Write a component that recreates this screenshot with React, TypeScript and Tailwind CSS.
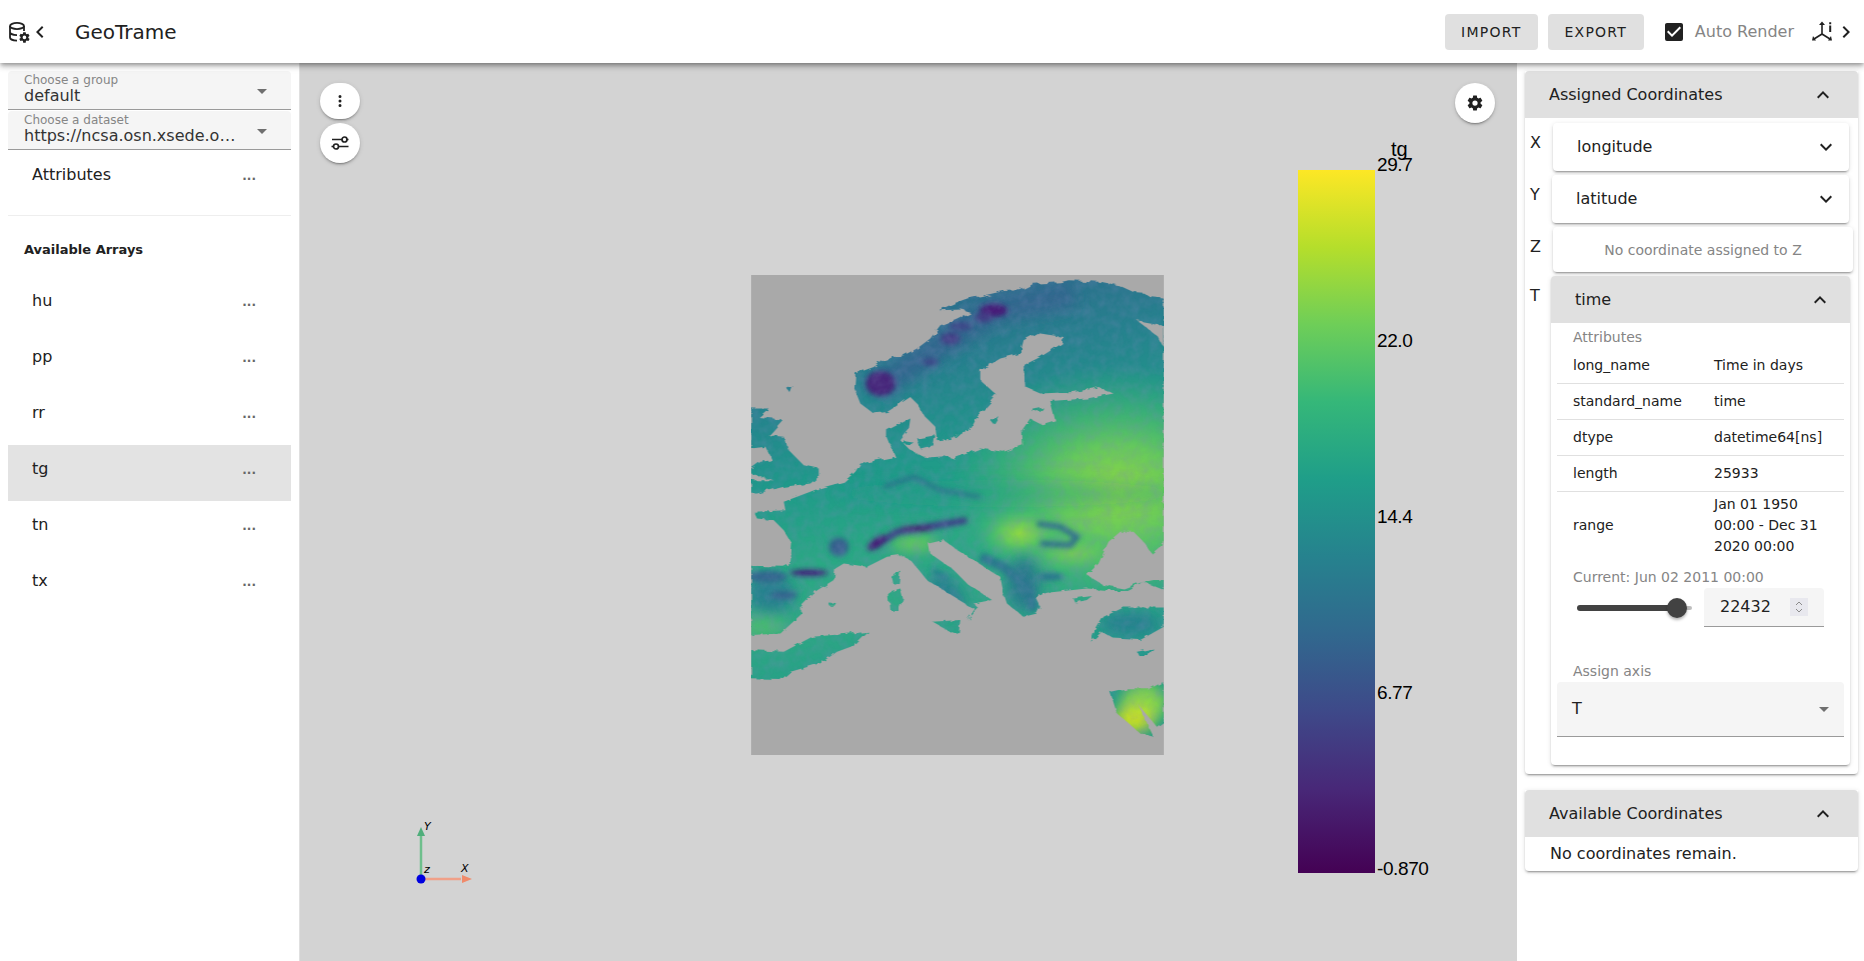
import React from "react";

const P = {
  down: "M7.41,8.58L12,13.17L16.59,8.58L18,10L12,16L6,10L7.41,8.58Z",
  up: "M7.41,15.41L12,10.83L16.59,15.41L18,14L12,8L6,14L7.41,15.41Z",
  left: "M15.41,16.58L10.83,12L15.41,7.41L14,6L8,12L14,18L15.41,16.58Z",
  right: "M8.59,16.58L13.17,12L8.59,7.41L10,6L16,12L10,18L8.59,16.58Z",
  menu: "M7,10L12,15L17,10H7Z",
  dots: "M12,16A2,2 0 0,1 14,18A2,2 0 0,1 12,20A2,2 0 0,1 10,18A2,2 0 0,1 12,16M12,10A2,2 0 0,1 14,12A2,2 0 0,1 12,14A2,2 0 0,1 10,12A2,2 0 0,1 12,10M12,4A2,2 0 0,1 14,6A2,2 0 0,1 12,8A2,2 0 0,1 10,6A2,2 0 0,1 12,4Z",
  check: "M10,17L5,12L6.41,10.58L10,14.17L17.59,6.58L19,8M19,3H5C3.89,3 3,3.89 3,5V19A2,2 0 0,0 5,21H19A2,2 0 0,0 21,19V5C21,3.89 20.1,3 19,3Z",
  cog: "M12,15.5A3.5,3.5 0 0,1 8.5,12A3.5,3.5 0 0,1 12,8.5A3.5,3.5 0 0,1 15.5,12A3.5,3.5 0 0,1 12,15.5M19.43,12.97C19.47,12.65 19.5,12.33 19.5,12C19.5,11.67 19.47,11.34 19.43,11L21.54,9.37C21.73,9.22 21.78,8.95 21.66,8.73L19.66,5.27C19.54,5.05 19.27,4.96 19.05,5.05L16.56,6.05C16.04,5.66 15.5,5.32 14.87,5.07L14.5,2.42C14.46,2.18 14.25,2 14,2H10C9.75,2 9.54,2.18 9.5,2.42L9.13,5.07C8.5,5.32 7.96,5.66 7.44,6.05L4.95,5.05C4.73,4.96 4.46,5.05 4.34,5.27L2.34,8.73C2.21,8.95 2.27,9.22 2.46,9.37L4.57,11C4.53,11.34 4.5,11.67 4.5,12C4.5,12.33 4.53,12.65 4.57,12.97L2.46,14.63C2.27,14.78 2.21,15.05 2.34,15.27L4.34,18.73C4.46,18.95 4.73,19.03 4.95,18.95L7.44,17.94C7.96,18.34 8.5,18.68 9.13,18.93L9.5,21.58C9.54,21.82 9.75,22 10,22H14C14.25,22 14.46,21.82 14.5,21.58L14.87,18.93C15.5,18.67 16.04,18.34 16.56,17.94L19.05,18.95C19.27,19.03 19.54,18.95 19.66,18.73L21.66,15.27C21.78,15.05 21.73,14.78 21.54,14.63L19.43,12.97Z",
};

function Mdi({ d, className = "", fill = "#212121" }: { d: string; className?: string; fill?: string }) {
  return (
    <svg viewBox="0 0 24 24" className={"w-6 h-6 shrink-0 " + className} fill={fill}>
      <path d={d} />
    </svg>
  );
}

function DbCog() {
  return (
    <svg viewBox="0 0 24 24" className="w-6 h-6 shrink-0" fill="none" stroke="#212121" strokeWidth="1.8">
      <ellipse cx="10" cy="6" rx="7" ry="3.1" />
      <path d="M3 6v11.5c0 1.7 3 3.1 7 3.1M3 12c0 1.7 3 3.1 7 3.1M17 6v5" />
      <g transform="translate(11.2,11.2) scale(0.52)" fill="#212121" stroke="none">
        <path d={P.cog} />
      </g>
    </svg>
  );
}

function AxisInfo() {
  return (
    <svg viewBox="0 0 24 24" className="w-6 h-6 shrink-0" fill="#212121" stroke="#212121" strokeWidth="1.6">
      <path d="M11 4v10M11 14l-8 5M11 14l8 5" fill="none" />
      <path d="M11 1.5l3 3.6H8zM1 20.5l1-4.4 3 4.4zM21 20.5l-1-4.4-3 4.4z" stroke="none" />
      <path d="M18.2 5.5h2v6.5h-2zM18.2 2.2h2v2h-2z" stroke="none" />
    </svg>
  );
}

function Tune() {
  return (
    <svg viewBox="0 0 24 24" className="w-6 h-6" fill="none" stroke="#212121" strokeWidth="1.7">
      <path d="M4 8.5h10M19 8.5h1.5M3.5 15.5H5.500M10.500 15.500H20.500" />
      <circle cx="16.5" cy="8.500" r="2.500" />
      <circle cx="8" cy="15.500" r="2.500" />
    </svg>
  );
}

const land = [
  "1271,115 1230,110 1210,97 1180,95 1135,75 1085,65 1040,62 985,60 960,66 880,70 840,90 790,92 720,108 680,115 640,130 595,150 665,148 690,155 650,175 600,195 570,235 530,265 490,285 460,290 430,300 400,320 345,340 342,385 360,430 400,460 440,455 510,410 530,430 550,465 585,500 590,540 640,535 660,518 690,510 710,470 770,405 720,360 720,330 780,295 840,280 850,240 890,218 970,230 965,250 900,290 850,315 855,380 900,400 1000,395 1060,385 1075,380 1120,400 1040,415 930,422 945,480 905,492 870,475 845,510 848,555 790,575 720,565 640,595 610,585 550,590 510,570 480,540 505,510 510,475 440,510 440,530 465,590 360,610 345,635 310,665 235,685 130,725 135,750 40,755 50,775 100,780 130,810 155,850 150,910 130,920 32,917 32,1125 120,1120 185,1060 175,1040 215,1000 280,960 285,925 310,910 380,920 440,890 480,885 510,900 560,960 640,1010 690,1040 705,1045 680,1080 715,1045 700,1030 755,1020 680,970 640,930 570,880 565,850 610,840 650,870 700,900 780,950 790,1000 800,1030 850,1070 890,1060 900,1040 885,1010 920,998 1040,985 1100,990 1160,990 1210,965 1271,990 1271,960 1240,960 1190,970 1150,985 1090,975 1040,945 1075,910 1105,845 1140,815 1180,815 1210,845 1235,880 1271,850",
  "32,445 85,445 55,470 128,478 85,525 130,530 140,565 190,615 235,625 235,650 210,670 130,680 50,700 32,700 32,660 100,660 32,640 32,625 60,605 95,600 75,560 32,565",
  "32,1170 130,1175 215,1130 330,1120 385,1115 345,1155 290,1175 240,1210 150,1235 120,1260 32,1258",
  "453,945 480,932 475,970 460,975",
  "445,995 480,985 488,1015 475,1050 450,1050",
  "575,1085 660,1080 655,1120 620,1110",
  "265,1030 290,1032 285,1040 270,1040",
  "1190,1175 1240,1165 1225,1185 1195,1185",
  "1000,1015 1055,1008 1040,1020 1005,1027",
  "1060,1120 1090,1070 1150,1042 1271,1042 1271,1100 1200,1140 1120,1135 1085,1115 1052,1145",
  "1110,1295 1160,1285 1230,1285 1271,1265 1271,1385 1250,1400 1195,1335 1240,1430 1200,1420 1130,1360",
  "490,540 520,545 510,555 490,552",
  "530,535 585,525 580,555 540,565",
  "750,480 775,468 760,492",
  "870,450 910,442 900,455",
  "140,385 158,378 150,398",
];

function MapPicture() {
  return (
    <svg viewBox="32 44 1239 1441" className="w-[413px] h-[480px] block">
      <defs>
        <linearGradient id="base" gradientUnits="userSpaceOnUse" x1="500" y1="60" x2="760" y2="1300">
          <stop offset="0" stop-color="#2f6a8d" />
          <stop offset="0.22" stop-color="#26828e" />
          <stop offset="0.42" stop-color="#1f9a8a" />
          <stop offset="0.6" stop-color="#2aa884" />
          <stop offset="0.75" stop-color="#2fa884" />
          <stop offset="1" stop-color="#1f9a8a" />
        </linearGradient>
        <radialGradient id="hot">
          <stop offset="0" stop-color="#8fd744" />
          <stop offset="0.35" stop-color="#6ece58" stop-opacity="0.9" />
          <stop offset="1" stop-color="#35b779" stop-opacity="0" />
        </radialGradient>
        <filter id="rough" filterUnits="userSpaceOnUse" x="0" y="0" width="1300" height="1500">
          <feTurbulence type="fractalNoise" baseFrequency="0.04" numOctaves="3" seed="4" />
          <feDisplacementMap in="SourceGraphic" scale="16" />
        </filter>
        <filter id="b10" filterUnits="userSpaceOnUse" x="0" y="0" width="1300" height="1500"><feGaussianBlur stdDeviation="8" /></filter>
        <filter id="b25" filterUnits="userSpaceOnUse" x="0" y="0" width="1300" height="1500"><feGaussianBlur stdDeviation="20" /></filter>
        <filter id="tex" filterUnits="userSpaceOnUse" x="0" y="0" width="1300" height="1500">
          <feTurbulence type="fractalNoise" baseFrequency="0.035" numOctaves="4" seed="9" />
          <feColorMatrix values="0 0 0 0 0.2  0 0 0 0 0.25  0 0 0 0 0.5  1.6 0 0 0 -0.55" />
        </filter>
        <mask id="landMask" maskUnits="userSpaceOnUse" x="0" y="0" width="1300" height="1500">
          <g fill="#fff" filter="url(#rough)">
            {land.map((p, i) => <polygon key={i} points={p} />)}
          </g>
          <g fill="#000" filter="url(#rough)">
            <polygon points="1190,180 1271,195 1271,260 1255,230" />
          </g>
        </mask>
      </defs>
      <rect x="32" y="44" width="1239" height="1441" fill="#a9a9a9" />
      <g mask="url(#landMask)">
        <rect x="0" y="0" width="1300" height="1500" fill="url(#base)" />
        <ellipse cx="1130" cy="690" rx="520" ry="380" fill="url(#hot)" />
        <ellipse cx="840" cy="820" rx="140" ry="90" fill="url(#hot)" />
        <ellipse cx="1000" cy="880" rx="170" ry="70" fill="url(#hot)" opacity="0.6" />
        <g filter="url(#b25)">
          <ellipse cx="520" cy="850" rx="70" ry="22" fill="#6ece58" />
          <ellipse cx="90" cy="1000" rx="70" ry="60" fill="#26828e" />
          <ellipse cx="60" cy="1100" rx="80" ry="30" fill="#5ec962" opacity="0.6" />
          <path d="M420 380 L560 280 L760 150 L1000 100" stroke="#31688e" strokeWidth="80" fill="none" />
          <ellipse cx="1170" cy="1090" rx="90" ry="35" fill="#26828e" />
          <ellipse cx="1210" cy="1330" rx="70" ry="60" fill="#86d549" />
          <ellipse cx="1180" cy="1380" rx="60" ry="40" fill="#c8e020" />
          <ellipse cx="800" cy="700" rx="500" ry="40" fill="#1f9a8a" opacity="0.35" />
          <ellipse cx="620" cy="1000" rx="40" ry="70" fill="#26828e" transform="rotate(-45 620 1000)" />
          <ellipse cx="850" cy="970" rx="50" ry="80" fill="#2c7b8d" />
        </g>
        <g filter="url(#b10)">
          <ellipse cx="420" cy="370" rx="45" ry="38" fill="#46277a" />
          <ellipse cx="760" cy="150" rx="42" ry="20" fill="#461e78" />
          <ellipse cx="630" cy="235" rx="30" ry="18" fill="#433e85" />
          <ellipse cx="730" cy="172" rx="28" ry="14" fill="#433e85" />
          <ellipse cx="660" cy="198" rx="35" ry="14" fill="#3e4989" />
          <ellipse cx="570" cy="305" rx="25" ry="12" fill="#3e4989" />
          <path d="M400 860 L470 815 L560 800 L680 780" stroke="#3f3f8a" strokeWidth="20" fill="none" />
          <ellipse cx="410" cy="848" rx="34" ry="14" fill="#461e78" transform="rotate(-35 410 848)" />
          <ellipse cx="530" cy="805" rx="50" ry="8" fill="#471a70" />
          <ellipse cx="295" cy="860" rx="30" ry="28" fill="#35608d" />
          <ellipse cx="205" cy="938" rx="58" ry="9" fill="#45177a" />
          <ellipse cx="80" cy="950" rx="60" ry="18" fill="#31688e" />
          <ellipse cx="130" cy="1005" rx="40" ry="12" fill="#33638d" />
          <path d="M890 790 L960 800 L1010 830 L990 855 L900 850" stroke="#2f6c8e" strokeWidth="16" fill="none" />
          <path d="M720 890 L790 920 L860 980 L880 1050" stroke="#2a788e" strokeWidth="28" fill="none" />
          <path d="M430 680 L520 650 L600 690 L720 710" stroke="#2f6c8e" strokeWidth="10" fill="none" />
          <ellipse cx="600" cy="945" rx="30" ry="10" fill="#26828e" transform="rotate(35 600 945)" />
          <ellipse cx="930" cy="950" rx="40" ry="12" fill="#2a788e" />
        </g>
        <rect x="0" y="0" width="1300" height="1500" filter="url(#tex)" opacity="0.3" />
      </g>
    </svg>
  );
}

function AxisWidget() {
  return (
    <svg viewBox="0 0 70 70" className="w-[70px] h-[70px]">
      <path d="M11 56V16" stroke="#6ebf8c" strokeWidth="2.500" />
      <path d="M11 7l-4 9h8z" fill="#4fae7b" />
      <path d="M11 59h40" stroke="#f0a088" strokeWidth="2.500" />
      <path d="M62 59l-10-4v8z" fill="#f08a6a" />
      <circle cx="11" cy="59" r="4.500" fill="#0000e0" />
      <text x="14" y="10" fontFamily="'DejaVu Sans',sans-serif" fontSize="11" fontStyle="italic" fill="#000">Y</text>
      <text x="14" y="53" fontFamily="'DejaVu Sans',sans-serif" fontSize="11" fontStyle="italic" fill="#000">z</text>
      <text x="51" y="52" fontFamily="'DejaVu Sans',sans-serif" fontSize="11" fontStyle="italic" fill="#000">X</text>
    </svg>
  );
}

const cardShadow = "shadow-[0_3px_1px_-2px_rgba(0,0,0,.2),0_2px_2px_0_rgba(0,0,0,.14),0_1px_5px_0_rgba(0,0,0,.12)]";

function Select({ label, value }: { label: string; value: string }) {
  return (
    <div className="flex h-[39px] items-start bg-[#f5f5f5] border-b border-b-[#9a9a9a] rounded-t pl-4 pr-[17px]">
      <div className="flex-1 min-w-0">
        <div className="text-xs leading-[14px] pt-[1px] mt-[1px] text-[#858585]">{label}</div>
        <div className="text-base leading-[18px] text-[#333] truncate w-[215px]">{value}</div>
      </div>
      <Mdi d={P.menu} fill="#6f6f6f" className="mt-2" />
    </div>
  );
}

function ArrayRow({ name, active }: { name: string; active?: boolean }) {
  return (
    <div className={"flex h-14 justify-between pl-6 pr-[35px] pt-3 " + (active ? "bg-[#e3e3e3]" : "")}>
      <span className="text-base leading-6 text-[#212121]">{name}</span>
      <span className="text-xs leading-6 pt-[1px] font-bold text-[#666]">...</span>
    </div>
  );
}

function AttrRow({ k, v, last }: { k: string; v: string; last?: boolean }) {
  return (
    <div className={"flex items-center text-sm leading-[21px] text-[#212121] " + (last ? "h-[66px]" : "h-9 border-b border-b-[#e0e0e0]")}>
      <span className="w-[157px] pl-4 shrink-0">{k}</span>
      <span className="w-[118px]">{v}</span>
    </div>
  );
}

function CoordCard({ name, ml, w, tx }: { name: string; ml: string; w: string; tx: string }) {
  return (
    <div className={"flex h-12 items-center justify-between bg-white rounded pr-[11px] " + ml + " " + w + " " + tx + " " + cardShadow}>
      <span className="text-base text-[#212121]">{name}</span>
      <Mdi d={P.down} />
    </div>
  );
}

function AxisLabel({ t, cls }: { t: string; cls: string }) {
  return <span className={"absolute left-[5px] text-base leading-6 text-[#212121] " + cls}>{t}</span>;
}

const ticks = [
  { v: "29.7", cls: "top-[-17px]" },
  { v: "22.0", cls: "top-[159px]" },
  { v: "14.4", cls: "top-[335px]" },
  { v: "6.77", cls: "top-[511px]" },
  { v: "-0.870", cls: "top-[687px]" },
];

export default function App() {
  return (
    <div className="h-screen w-full overflow-hidden bg-white flex flex-col font-['DejaVu_Sans',sans-serif] text-[#212121]">
      <header className="relative z-10 h-[63px] shrink-0 bg-white flex items-center pl-[7px] pr-[6px] shadow-[0_2px_4px_-1px_rgba(0,0,0,.3),0_4px_5px_0_rgba(0,0,0,.16),0_1px_10px_0_rgba(0,0,0,.12)]">
        <DbCog />
        <Mdi d={P.left} className="-ml-[3px]" />
        <span className="ml-[23px] text-xl text-[#212121]">GeoTrame</span>
        <div className="ml-auto flex items-center">
          <button className="h-9 w-[93px] rounded bg-[#e0e0e0] text-sm tracking-[1.25px] text-[#212121]">IMPORT</button>
          <button className="ml-[10px] h-9 w-[96px] rounded bg-[#e0e0e0] text-sm tracking-[1.25px] text-[#212121]">EXPORT</button>
          <Mdi d={P.check} className="ml-[18px]" />
          <span className="ml-[9px] text-base text-[#858585]">Auto Render</span>
          <span className="ml-[17px]"><AxisInfo /></span>
          <Mdi d={P.right} className="-ml-[1px]" />
        </div>
      </header>

      <div className="flex flex-1 min-h-0">
        <aside className="w-[300px] shrink-0 bg-white pl-2 pr-[8px] pt-2 border-r border-r-[#e0e0e0]">
          <div className="flex flex-col gap-[1px]">
            <Select label="Choose a group" value="default" />
            <Select label="Choose a dataset" value="https://ncsa.osn.xsede.org/Pangeo/" />
          </div>
          <div className="h-12 flex justify-between pl-6 pr-[35px] pt-3 mt-[1px]">
            <span className="text-base leading-6">Attributes</span>
            <span className="text-xs leading-6 pt-[1px] font-bold text-[#666]">...</span>
          </div>
          <div className="mt-4 border-t border-t-[#eeeeee]" />
          <div className="h-[61px] pl-4 pt-[24px] text-[13px] leading-5 font-bold text-[#212121]">Available Arrays</div>
          {["hu", "pp", "rr", "tg", "tn", "tx"].map((n) => (
            <ArrayRow key={n} name={n} active={n === "tg"} />
          ))}
        </aside>

        <main className="relative flex-1 bg-[#d3d3d3] overflow-hidden">
          <div className="absolute left-[20px] top-[20px] flex flex-col gap-1">
            <div className={"w-10 h-9 rounded-full bg-white flex items-center justify-center " + cardShadow}>
              <Mdi d={P.dots} className="w-[18px]! h-[18px]!" />
            </div>
            <div className={"w-10 h-10 rounded-full bg-white flex items-center justify-center " + cardShadow}>
              <Tune />
            </div>
          </div>
          <div className={"absolute left-[1155px] top-[20px] w-10 h-10 rounded-full bg-white flex items-center justify-center " + cardShadow}>
            <Mdi d={P.cog} className="w-[18px]! h-[18px]!" />
          </div>
          <div className="absolute left-[451px] top-[212px]"><MapPicture /></div>
          <div className="absolute left-[998px] top-[107px] w-[77px] h-[703px] bg-[linear-gradient(to_bottom,#fde725_0%,#b5de2b_11%,#6ece58_22%,#35b779_33%,#1f9e89_44%,#26828e_55%,#31688e_66%,#3e4989_77%,#482878_88%,#440154_100%)]">
            <span className="absolute left-[93px] top-[-33px] font-['Liberation_Sans',sans-serif] text-[20px] leading-6 text-black">tg</span>
            {ticks.map((t) => (
              <span key={t.v} className={"absolute left-[79px] font-['Liberation_Sans',sans-serif] text-[19px] tracking-[-0.4px] leading-6 text-black " + t.cls}>{t.v}</span>
            ))}
          </div>
          <div className="absolute left-[110px] top-[757px]"><AxisWidget /></div>
        </main>

        <aside className="w-[347px] shrink-0 bg-white pl-2 pr-[6px] pt-2">
          <div className={"rounded-b bg-white pb-[9px] " + cardShadow}>
            <div className="h-[47px] bg-[#e0e0e0] rounded-t flex items-center justify-between pl-6 pr-[23px]">
              <span className="text-base">Assigned Coordinates</span>
              <Mdi d={P.up} />
            </div>
            <div className="relative pt-[5px] flex flex-col">
              <AxisLabel t="X" cls="top-[13px]" />
              <AxisLabel t="Y" cls="top-[65px]" />
              <AxisLabel t="Z" cls="top-[117px]" />
              <AxisLabel t="T" cls="top-[166px]" />
              <CoordCard name="longitude" ml="ml-[28px]" w="w-[296px]" tx="pl-6" />
              <div className="h-1" />
              <CoordCard name="latitude" ml="ml-[27px]" w="w-[297px]" tx="pl-6" />
              <div className="h-1" />
              <div className={"ml-[28px] w-[300px] h-[45px] rounded bg-white flex items-center justify-center text-sm text-[#858585] " + cardShadow}>No coordinate assigned to Z</div>
              <div className="h-1" />
              <div className={"ml-[26px] w-[299px] rounded overflow-hidden bg-white pb-[28px] " + cardShadow}>
                <div className="h-[47px] bg-[#e0e0e0] flex items-center justify-between pl-6 pr-[18px]">
                  <span className="text-base">time</span>
                  <Mdi d={P.up} />
                </div>
                <div className="mt-1 pl-[22px] text-sm leading-[21px] text-[#858585]">Attributes</div>
                <div className="mx-[6px]">
                  <AttrRow k="long_name" v="Time in days" />
                  <AttrRow k="standard_name" v="time" />
                  <AttrRow k="dtype" v="datetime64[ns]" />
                  <AttrRow k="length" v="25933" />
                  <AttrRow k="range" v="Jan 01 1950 00:00 - Dec 31 2020 00:00" last />
                </div>
                <div className="mt-[9px] pl-[22px] text-sm leading-[21px] text-[#858585]">Current: Jun 02 2011 00:00</div>
                <div className="flex items-start pl-[26px]">
                  <div className="relative w-[115px] h-[39px] shrink-0">
                    <div className="absolute left-0 top-[17px] h-1.5 w-[100px] rounded-l-full bg-[#424242]" />
                    <div className="absolute left-[100px] top-[18px] h-1 w-[15px] rounded-r-full bg-[#bdbdbd]" />
                    <div className="absolute left-[90px] top-[10px] h-5 w-5 rounded-full bg-[#424242] shadow-[0_2px_3px_rgba(0,0,0,.3)]" />
                  </div>
                  <div className="ml-3 h-[39px] w-[120px] bg-[#f5f5f5] border-b border-b-[#9a9a9a] rounded-t flex items-center pl-4 pr-[16px] justify-between">
                    <span className="text-base">22432</span>
                    <span className="w-[18px] h-[18px] bg-[#e8e8ee] flex flex-col items-center justify-center">
                      <svg viewBox="0 0 10 14" className="w-2.5 h-3.5" fill="none" stroke="#8a8a8a" strokeWidth="1"><path d="M2 5l3-3 3 3M2 9l3 3 3-3" /></svg>
                    </span>
                  </div>
                </div>
                <div className="mt-[34px] pl-[22px] text-sm leading-[21px] text-[#858585]">Assign axis</div>
                <div className="mx-[6px] h-[55px] bg-[#f5f5f5] border-b border-b-[#9a9a9a] rounded-t flex items-center justify-between pl-[15px] pr-[8px]">
                  <span className="text-base">T</span>
                  <Mdi d={P.menu} fill="#6f6f6f" />
                </div>
              </div>
            </div>
          </div>

          <div className={"mt-4 rounded-b bg-white h-[81px] " + cardShadow}>
            <div className="h-[47px] bg-[#e0e0e0] rounded-t flex items-center justify-between pl-6 pr-[23px]">
              <span className="text-base">Available Coordinates</span>
              <Mdi d={P.up} />
            </div>
            <div className="pl-[25px] pt-[5px] text-base leading-6">No coordinates remain.</div>
          </div>
        </aside>
      </div>
    </div>
  );
}
